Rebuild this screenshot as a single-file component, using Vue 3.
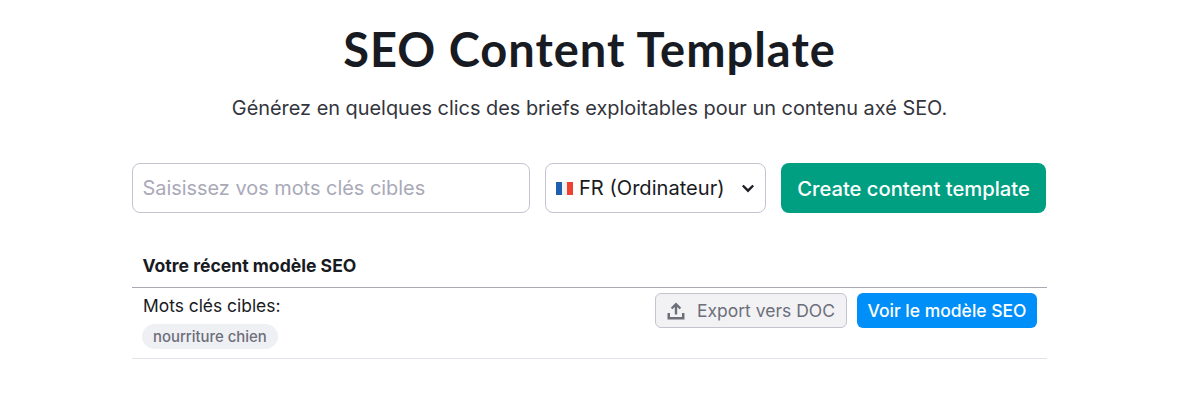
<script setup>
</script>

<template>
  <main class="page">
    <h1 class="title">SEO Content Template</h1>
    <p class="subtitle">Générez en quelques clics des briefs exploitables pour un contenu axé SEO.</p>
    <form class="search" @submit.prevent>
      <input class="keyword" type="text" placeholder="Saisissez vos mots clés cibles" />
      <button class="select" type="button">
        <svg class="flag" width="17" height="13" viewBox="0 0 17 13">
          <rect width="6" height="13" fill="#1f5fb0" />
          <rect x="6" width="5" height="13" fill="#f4f1f3" />
          <rect x="11" width="6" height="13" fill="#f0402f" />
        </svg>
        <span>FR (Ordinateur)</span>
        <svg class="chev" width="14" height="9" viewBox="0 0 14 9">
          <path d="M1.8 1.5 7 6.7l5.2-5.2" fill="none" stroke="#1f2024" stroke-width="2.4" />
        </svg>
      </button>
      <button class="create" type="button">Create content template</button>
    </form>
    <section class="recent">
      <h2 class="recent-head">Votre récent modèle SEO</h2>
      <div class="row">
        <div class="info">
          <div class="label">Mots clés cibles:</div>
          <span class="tag">nourriture chien</span>
        </div>
        <div class="actions">
          <button class="export" type="button">
            <svg width="18" height="18" viewBox="0 0 18 18" fill="#6c6e79">
              <path d="M9 0.5 14.2 5.7 12.6 7.3 10.2 4.9V12.5H7.8V4.9L5.4 7.3 3.8 5.7Z" />
              <path d="M0.5 11H3V15H15V11H17.5V17.5H0.5Z" />
            </svg>
            <span>Export vers DOC</span>
          </button>
          <button class="view" type="button">Voir le modèle SEO</button>
        </div>
      </div>
    </section>
  </main>
</template>

<style>
html, body { margin: 0; background: #fff; }
</style>

<style scoped>
.page {
  width: 915px;
  margin: 0 auto;
  font-family: Inter, "Liberation Sans", sans-serif;
  color: #191b23;
}
.title {
  margin: 0;
  padding-top: 20px;
  height: 58px;
  line-height: 58px;
  font-family: Lato, "Noto Sans", sans-serif;
  font-size: 47px;
  font-weight: 700;
  letter-spacing: 1px;
  text-align: center;
}
.subtitle {
  margin: 17px 0 0;
  line-height: 26px;
  font-size: 19.9px;
  color: #33353d;
  text-align: center;
}
.search {
  display: flex;
  gap: 15px;
  margin-top: 42px;
  height: 50px;
}
.keyword {
  width: 398px;
  box-sizing: border-box;
  border: 1px solid #c4c3d0;
  border-radius: 8px;
  padding: 0 9.5px;
  font: 19.9px Inter, sans-serif;
  color: #191b23;
  outline: none;
}
.keyword::placeholder { color: #a9a9b8; opacity: 1; }
.select {
  width: 221px;
  box-sizing: border-box;
  display: flex;
  align-items: center;
  border: 1px solid #c4c3d0;
  border-radius: 8px;
  background: #fff;
  padding: 0 10px 0 10px;
  font: 20.1px Inter, sans-serif;
  color: #191b23;
}
.flag { margin-right: 6px; flex: none; }
.chev { margin-left: auto; flex: none; }
.create {
  width: 265px;
  border: 0;
  border-radius: 8px;
  background: #009f81;
  color: #fff;
  font: 500 20.2px Inter, sans-serif;
}
.recent { margin-top: 25px; }
.recent-head {
  margin: 0;
  padding: 0 10.5px;
  line-height: 55px;
  box-sizing: border-box;
  font-size: 17.6px;
  font-weight: 700;
  border-bottom: 1px solid #a9a9b3;
  height: 50px;
}
.row {
  display: flex;
  justify-content: space-between;
  height: 71px;
  box-sizing: border-box;
  border-bottom: 1px solid #e3e3ea;
  padding: 5px 10px 0;
}
.label { font-size: 17.4px; line-height: 26px; color: #191b23; padding-left: 1px; }
.tag {
  display: inline-block;
  margin-top: 5px;
  height: 25px;
  line-height: 26px;
  padding: 0 11px;
  border-radius: 13px;
  background: #eff0f4;
  color: #6c6e79;
  font-size: 14.9px;
  font-weight: 500;
}
.actions { display: flex; gap: 10px; align-items: flex-start; }
.export, .view {
  height: 35px;
  border-radius: 6px;
  font: 500 17.5px Inter, sans-serif;
  display: flex;
  align-items: center;
  box-sizing: border-box;
  white-space: nowrap;
}
.export {
  width: 192px;
  gap: 12px;
  padding: 0 11px;
  background: #f2f2f5;
  border: 1px solid #c4c3d0;
  color: #6c6e79;
  font-weight: 400;
}
.view {
  width: 180px;
  justify-content: center;
  border: 0;
  background: #008ff8;
  color: #fff;
}
</style>
